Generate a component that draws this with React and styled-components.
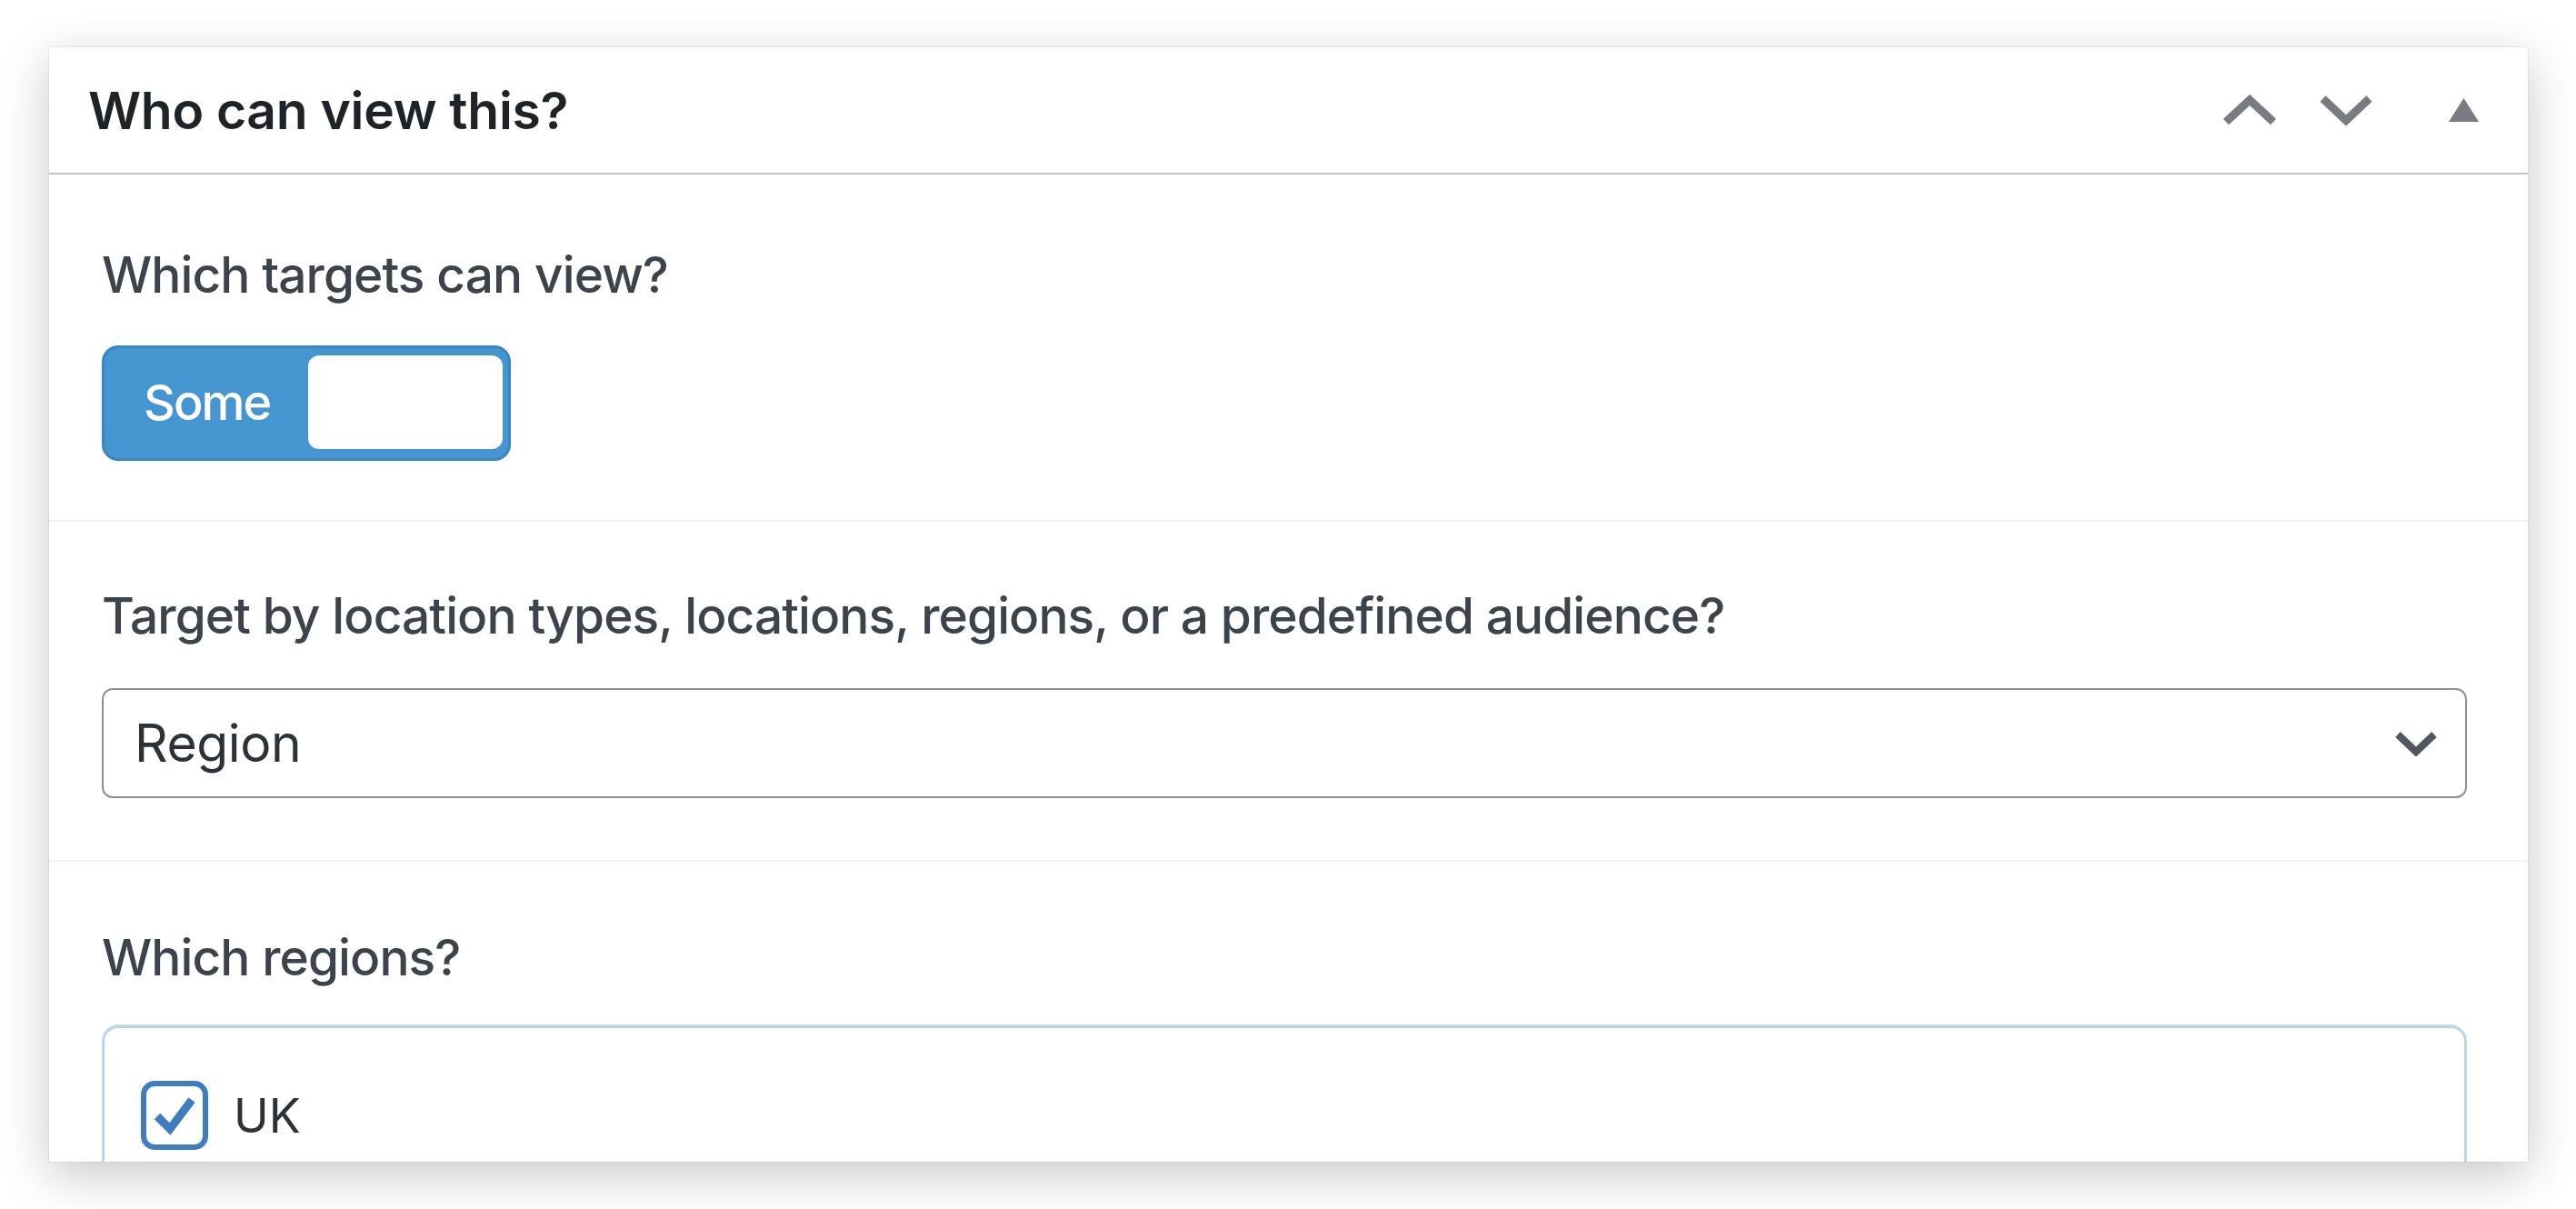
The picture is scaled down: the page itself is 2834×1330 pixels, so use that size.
import React from 'react';
import styled, { createGlobalStyle } from 'styled-components';

const GlobalStyle = createGlobalStyle`
  html, body {
    margin: 0;
    padding: 0;
    background: #ffffff;
  }
  body {
    font-family: Inter, "Noto Sans", Roboto, sans-serif;
  }
`;

const Page = styled.div`
  padding: 52px 0 0 54px;
  width: 2834px;
  height: 1330px;
  box-sizing: border-box;
  overflow: hidden;
`;

const Panel = styled.div`
  width: 2727px;
  height: 1226px;
  background: #fff;
  overflow: hidden;
  box-shadow: 0 14px 50px rgba(0, 0, 0, 0.22), 0 0 0 1px rgba(0, 0, 0, 0.04);
`;

const Header = styled.div`
  display: flex;
  align-items: center;
  height: 138px;
  border-bottom: 2px solid #c3c4c7;
  padding-left: 43px;
`;

const Title = styled.h2`
  flex: 1;
  margin: 0;
  font-size: 57px;
  font-weight: 600;
  color: #1d2327;
  letter-spacing: -0.3px;
`;

const Handles = styled.div`
  display: flex;
  align-items: center;
  height: 100%;
`;

const HandleButton = styled.button`
  width: ${(p) => p.$w}px;
  margin-left: ${(p) => p.$gap || 0}px;
  height: 100%;
  border: none;
  background: transparent;
  padding: 0;
  display: flex;
  align-items: center;
  justify-content: center;
  color: #787c82;
`;

const Section = styled.div`
  padding: ${(p) => p.$top}px 67px ${(p) => p.$bottom}px 58px;
  border-bottom: ${(p) => (p.$last ? 'none' : '2px solid #f0f0f1')};
`;

const Label = styled.div`
  font-size: 55px;
  line-height: 66px;
  font-weight: 500;
  color: #3c434a;
  letter-spacing: -0.9px;
  margin-bottom: ${(p) => p.$gap}px;
`;

const Toggle = styled.div`
  display: flex;
  align-items: center;
  box-sizing: border-box;
  width: 450px;
  height: 127px;
  border-radius: 18px;
  background: #4596d0;
  border: 3px solid #3a86c2;
  padding: 8px 6px 10px 43px;
`;

const ToggleText = styled.span`
  font-size: 54px;
  font-weight: 500;
  color: #fff;
  letter-spacing: -2px;
  width: 181px;
`;

const Knob = styled.span`
  flex: 1;
  height: 100%;
  background: #fff;
  border-radius: 12px;
`;

const Select = styled.div`
  display: flex;
  align-items: center;
  justify-content: space-between;
  box-sizing: border-box;
  height: 121px;
  border: 2px solid #8c8f94;
  border-radius: 12px;
  padding: 0 30px 0 34px;
  font-size: 57px;
  letter-spacing: -0.4px;
  color: #2c3338;
`;

const ListBox = styled.div`
  box-sizing: border-box;
  height: 260px;
  border: 3px solid #bad6ec;
  border-radius: 18px;
  box-shadow: 0 -1px 0 #dcdcde;
  padding: 58px 40px;
`;

const CheckRow = styled.label`
  display: flex;
  align-items: center;
  gap: 28px;
  font-size: 52px;
  color: #2c3338;
`;

const CheckBox = styled.span`
  display: flex;
  align-items: center;
  justify-content: center;
  box-sizing: border-box;
  width: 74px;
  height: 76px;
  border: 6px solid #3f7dc0;
  border-radius: 15px;
`;

const ChevronUp = () => (
  <svg width="60" height="34" viewBox="0 0 60 34">
    <polyline points="4,30 30,6 56,30" fill="none" stroke="currentColor" strokeWidth="9" />
  </svg>
);

const ChevronDown = ({ w = 60, h = 34, sw = 9 }) => (
  <svg width={w} height={h} viewBox={`0 0 ${w} ${h}`}>
    <polyline
      points={`${sw / 2},${sw / 2} ${w / 2},${h - sw / 2 - 1} ${w - sw / 2},${sw / 2}`}
      fill="none"
      stroke="currentColor"
      strokeWidth={sw}
    />
  </svg>
);

const Triangle = () => (
  <svg width="33" height="26" viewBox="0 0 33 26">
    <polygon points="16.5,0 33,26 0,26" fill="currentColor" />
  </svg>
);

const Check = () => (
  <svg width="50" height="50" viewBox="0 0 50 50">
    <path d="M6 26 L20 40 L44 8" fill="none" stroke="#3f7dc0" strokeWidth="9" strokeLinejoin="miter" />
  </svg>
);

const SelectChevron = styled.span`
  display: flex;
  color: #50575e;
`;

const App = () => {
  return (
    <Page>
      <GlobalStyle />
      <Panel>
        <Header>
          <Title>Who can view this?</Title>
          <Handles>
            <HandleButton $w={106}><ChevronUp /></HandleButton>
            <HandleButton $w={106}><ChevronDown /></HandleButton>
            <HandleButton $w={142} $gap={5}><Triangle /></HandleButton>
          </Handles>
        </Header>

        <Section $top={77} $bottom={65}>
          <Label $gap={45}>Which targets can view?</Label>
          <Toggle>
            <ToggleText>Some</ToggleText>
            <Knob />
          </Toggle>
        </Section>

        <Section $top={70} $bottom={68}>
          <Label $gap={47}>Target by location types, locations, regions, or a predefined audience?</Label>
          <Select>
            <span>Region</span>
            <SelectChevron><ChevronDown w={48} h={28} sw={8} /></SelectChevron>
          </Select>
        </Section>

        <Section $top={72} $bottom={0} $last>
          <Label $gap={42}>Which regions?</Label>
          <ListBox>
            <CheckRow>
              <CheckBox><Check /></CheckBox>
              UK
            </CheckRow>
          </ListBox>
        </Section>
      </Panel>
    </Page>
  );
};

export default App;
